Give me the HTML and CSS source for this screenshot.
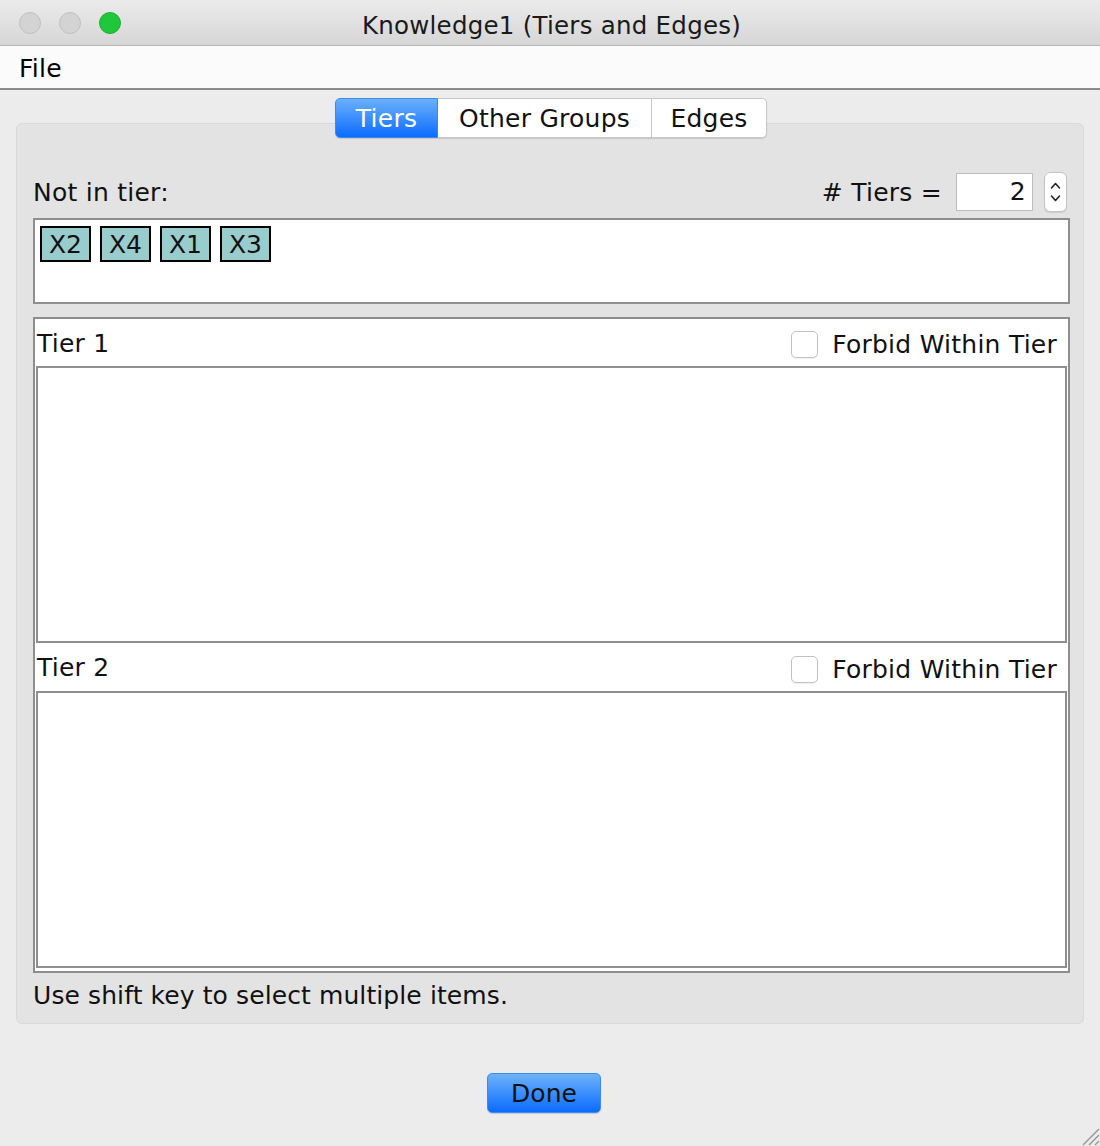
FILE: index.html
```html
<!DOCTYPE html>
<html>
<head>
<meta charset="utf-8">
<link rel="stylesheet" href="styles.css">
</head>
<body>
<div class="window">
  <div class="titlebar">
    <div class="lights">
      <span class="light gray"></span>
      <span class="light gray"></span>
      <span class="light green"></span>
    </div>
    <div class="title">Knowledge1 (Tiers and Edges)</div>
  </div>
  <div class="menubar"><span class="menu">File</span></div>
  <div class="main">
    <div class="tabs">
      <div class="tab active">Tiers</div>
      <div class="tab">Other Groups</div>
      <div class="tab last">Edges</div>
    </div>
    <div class="panel">
      <div class="header-row">
        <span class="label">Not in tier:</span>
        <div class="count">
          <span class="label">#&nbsp;Tiers =</span>
          <div class="numfield">2</div>
          <div class="spinner">
            <svg width="23" height="40" viewBox="0 0 23 40">
              <path d="M7.5 16 L11.5 11.5 L15.5 16" fill="none" stroke="#222" stroke-width="1.6" stroke-linecap="round" stroke-linejoin="round"/>
              <path d="M7.5 24 L11.5 28.5 L15.5 24" fill="none" stroke="#222" stroke-width="1.6" stroke-linecap="round" stroke-linejoin="round"/>
            </svg>
          </div>
        </div>
      </div>
      <div class="pool">
        <span class="chip">X2</span>
        <span class="chip">X4</span>
        <span class="chip">X1</span>
        <span class="chip">X3</span>
      </div>
      <div class="tiers">
        <div class="tier-head">
          <span class="tier-name">Tier 1</span>
          <label class="forbid"><span class="check"></span>Forbid Within Tier</label>
        </div>
        <div class="tier-list"></div>
        <div class="tier-head second">
          <span class="tier-name">Tier 2</span>
          <label class="forbid"><span class="check"></span>Forbid Within Tier</label>
        </div>
        <div class="tier-list"></div>
      </div>
      <div class="hint">Use shift key to select multiple items.</div>
    </div>
    <div class="actions">
      <button class="done">Done</button>
    </div>
  </div>
  <svg class="grip" width="22" height="22" viewBox="0 0 22 22">
    <path d="M21 5 L5 21 M21 11 L11 21 M21 17 L17 21" stroke="#9a9a9a" stroke-width="1.5"/>
  </svg>
</div>
</body>
</html>
```
FILE: styles.css
```css
html, body {
  margin: 0;
  padding: 0;
}
body {
  width: 1100px;
  height: 1146px;
  background: #ececec;
  font-family: "DejaVu Sans", "Liberation Sans", sans-serif;
  font-size: 25px;
  letter-spacing: 0.25px;
  color: #111;
  overflow: hidden;
}
.window {
  position: relative;
  width: 1100px;
  height: 1146px;
  display: flex;
  flex-direction: column;
}
.titlebar {
  height: 45px;
  border-bottom: 1px solid #b5b5b5;
  background: linear-gradient(#ebebeb, #d6d6d6);
  display: flex;
  align-items: center;
  position: relative;
}
.lights {
  display: flex;
  gap: 18px;
  padding-left: 19px;
}
.light {
  width: 22px;
  height: 22px;
  border-radius: 50%;
  box-sizing: border-box;
}
.light.gray {
  background: #d3d3d3;
  border: 1px solid #c0c0c0;
}
.light.green {
  background: #1fc83a;
  border: 1px solid #1aae30;
}
.title {
  flex: 1;
  text-align: center;
  margin-right: 106px;
  margin-left: -12px;
  margin-top: 5px;
  font-size: 24.5px;
  color: #1a1a1a;
}
.menubar {
  height: 42px;
  background: #fbfbfb;
  border-bottom: 2px solid #8c8c8c;
  display: flex;
  align-items: center;
}
.menu {
  padding-left: 19px;
  padding-top: 3px;
  color: #000;
}
.main {
  padding: 8px 16px 0;
  display: flex;
  flex-direction: column;
}
.tabs {
  display: flex;
  justify-content: center;
  margin-left: 2px;
  height: 40px;
  margin-bottom: -15px;
  position: relative;
  z-index: 1;
}
.tab {
  height: 40px;
  box-sizing: border-box;
  background: #fff;
  border: 1px solid #c8c8c8;
  border-left: none;
  display: flex;
  align-items: center;
  justify-content: center;
  padding: 0;
  color: #111;
  box-shadow: 0 1px 1px rgba(0,0,0,0.12);
}
.tab.active {
  background: linear-gradient(#6ab0fb, #0c6cff);
  color: #fff;
  border: 1px solid #3b8cf0;
  border-radius: 5px 0 0 5px;
  width: 103px;
}
.tab:nth-child(2) {
  width: 214px;
}
.tab.last {
  border-radius: 0 5px 5px 0;
  width: 115px;
}
.panel {
  height: 901px;
  box-sizing: border-box;
  background: #e3e3e3;
  border: 1px solid #d9d9d9;
  border-radius: 6px;
  padding: 48px 13px 0 16px;
  display: flex;
  flex-direction: column;
}
.header-row {
  height: 40px;
  display: flex;
  align-items: center;
  justify-content: space-between;
}
.count {
  display: flex;
  align-items: center;
}
.numfield {
  width: 77px;
  height: 38px;
  box-sizing: border-box;
  background: #fff;
  border: 1px solid #bdbdbd;
  margin-left: 14px;
  text-align: right;
  padding-right: 6px;
  line-height: 36px;
}
.spinner {
  width: 23px;
  height: 40px;
  box-sizing: border-box;
  margin-left: 11px;
  background: #fff;
  border: 1px solid #c4c4c4;
  border-radius: 6px;
  display: flex;
  margin-right: 3px;
  box-shadow: 0 1px 1px rgba(0,0,0,0.1);
}
.spinner svg {
  margin: -1px;
}
.pool {
  margin-top: 6px;
  height: 86px;
  box-sizing: border-box;
  background: #fff;
  border: 2px solid #8e8e8e;
  padding: 6px 5px;
  display: flex;
  align-items: flex-start;
  gap: 9px;
}
.chip {
  width: 51px;
  height: 36px;
  box-sizing: border-box;
  background: #99cccc;
  border: 2px solid #000;
  display: flex;
  align-items: center;
  justify-content: center;
  color: #111;
  letter-spacing: 0;
}
.tiers {
  margin-top: 13px;
  height: 656px;
  box-sizing: border-box;
  border: 2px solid #8e8e8e;
  background: #fff;
  padding: 0 1px 1px 1px;
  display: flex;
  flex-direction: column;
}
.tier-head {
  height: 47px;
  display: flex;
  align-items: center;
  justify-content: space-between;
  padding: 0 10px 0 1px;
}
.tier-head.second {
  height: 48px;
}
.tier-name {
  margin-top: 1px;
}
.forbid {
  display: flex;
  align-items: center;
  color: #111;
  margin-top: 4px;
}
.check {
  width: 27px;
  height: 27px;
  box-sizing: border-box;
  border: 1px solid #c2c2c2;
  border-radius: 5px;
  background: #fff;
  margin-right: 14px;
  box-shadow: 0 1px 1px rgba(0,0,0,0.06);
}
.tier-list {
  height: 277px;
  box-sizing: border-box;
  border: 2px solid #8e8e8e;
  background: #fff;
}
.hint {
  margin-top: 8px;
  letter-spacing: 0.1px;
}
.actions {
  display: flex;
  justify-content: center;
  padding-top: 49px;
  padding-right: 12px;
}
.done {
  width: 114px;
  height: 40px;
  border: 1px solid #3c8cf2;
  border-radius: 5px;
  background: linear-gradient(#6cb2fb, #0b6bff);
  font-family: "DejaVu Sans", "Liberation Sans", sans-serif;
  font-size: 25px;
  color: #111;
  padding: 0;
  box-shadow: 0 1px 1px rgba(0,0,0,0.15);
}
.grip {
  position: absolute;
  right: 0;
  bottom: 0;
}
```
